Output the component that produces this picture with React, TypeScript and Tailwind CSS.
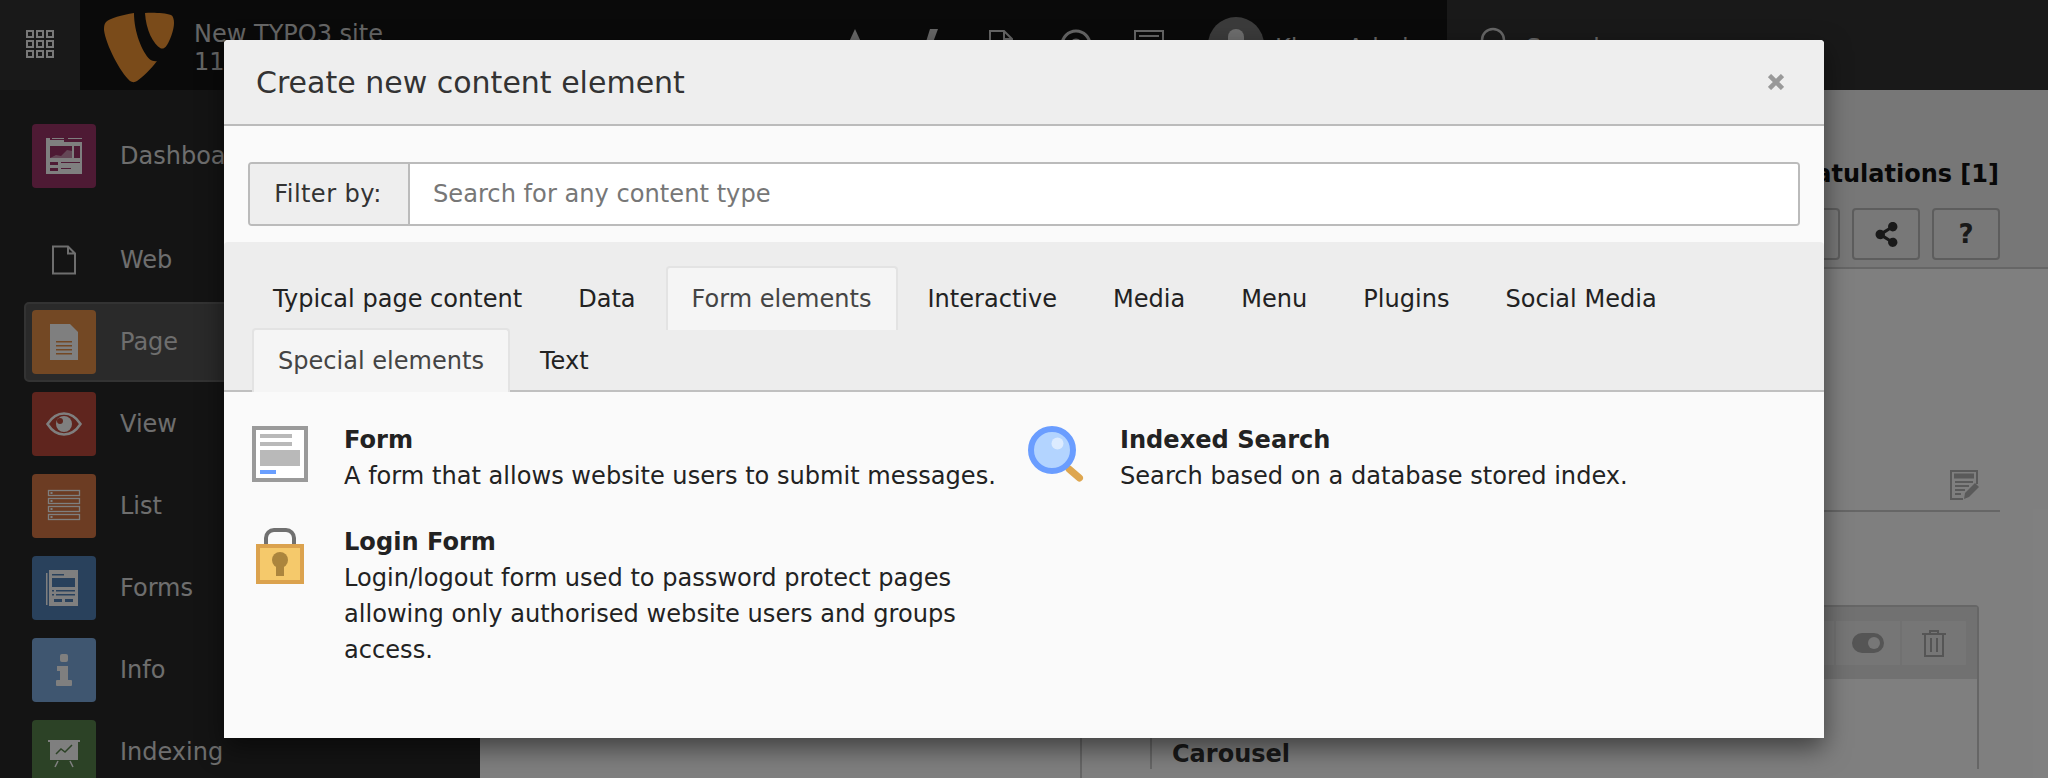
import React from 'react';
import { FaShareAlt } from 'react-icons/fa';

const tabs = [
  { label: 'Typical page content', first: true },
  { label: 'Data' },
  { label: 'Form elements', active: true },
  { label: 'Interactive' },
  { label: 'Media' },
  { label: 'Menu' },
  { label: 'Plugins' },
  { label: 'Social Media' },
  { label: 'Special elements', active: true },
  { label: 'Text' },
];

const DashboardIcon = () => (
  <svg width="64" height="64" viewBox="0 0 64 64">
    <path d="M14 14h4v2h14v2h18v32H14z" fill="#fff" />
    <path d="M20 14h12v1H20zM36 14h14v1H36z" fill="#fff" />
    <path d="M18 22h22v12H18zM42 22h6v12h-6z" fill="#9c3468" />
    <path d="M18 34l6-3 5 1 6-6 5 1v7H18z" fill="#fff" opacity="0.45" />
    <path d="M18 38h8v3h-8zM29 38h19v1H29zM18 44h8v3h-8zM29 44h10v1H29z" fill="#9c3468" />
  </svg>
);

const PageIcon = () => (
  <svg width="64" height="64" viewBox="0 0 64 64">
    <path d="M18 14h20l8 8v28H18z" fill="#fff" />
    <path d="M24 31h16v1.500H24zM24 35h16v1.500H24zM24 39h16v1.500H24zM24 43h16v1.500H24z" fill="#e69049" />
  </svg>
);

const EyeIcon = () => (
  <svg width="64" height="64" viewBox="0 0 64 64">
    <path d="M15.500 32C20 25 26 21.500 32 21.500S44 25 48.500 32C44 39 38 42.500 32 42.500S20 39 15.500 32z" fill="none" stroke="#fff" strokeWidth="2.500" />
    <circle cx="32" cy="32" r="8" fill="#fff" />
    <circle cx="28" cy="29" r="3" fill="#be4a3c" />
  </svg>
);

const ListIcon = () => (
  <svg width="64" height="64" viewBox="0 0 64 64">
    {[16, 24, 32, 40].map((y) => (
      <g key={y}>
        <rect x="16.500" y={y + 0.5} width="31" height="5" fill="none" stroke="#fff" strokeWidth="1.300" />
        <rect x="18.500" y={y + 2} width="2" height="2" fill="#fff" />
      </g>
    ))}
  </svg>
);

const FormsIcon = () => (
  <svg width="64" height="64" viewBox="0 0 64 64">
    <path d="M14 17h1.500v32H14zM17 14h29v36H17z" fill="#fff" />
    <path d="M20 18h12v1.500H20zM20 22h23v9H20zM20 34h2v1.500h-2zM24 34h19v1.500H24zM20 38h2v1.500h-2zM24 38h19v1.500H24z" fill="#5282b8" />
    <path d="M22 43h8v3h-8zM33 43h8v3h-8z" fill="#5282b8" />
  </svg>
);

const InfoIcon = () => (
  <svg width="64" height="64" viewBox="0 0 64 64">
    <rect x="28" y="16" width="8" height="8" rx="2" fill="#fff" />
    <path d="M25 28h11v14h3a1 1 0 0 1 1 1v4a1 1 0 0 1-1 1H25a1 1 0 0 1-1-1v-4a1 1 0 0 1 1-1h3v-9h-3z" fill="#fff" />
  </svg>
);

const IndexingIcon = () => (
  <svg width="64" height="64" viewBox="0 0 64 64">
    <path d="M16 20h32v2h-2v18H18V22h-2z" fill="#fff" />
    <path d="M24 34l5-5 4 3 7-7" fill="none" stroke="#58844c" strokeWidth="1.500" />
    <path d="M26 41l-3 6M38 41l3 6" fill="none" stroke="#fff" strokeWidth="1.500" />
  </svg>
);

const sidebarItems = [
  { label: 'Page', color: 'bg-[#e69049]', icon: <PageIcon />, active: true },
  { label: 'View', color: 'bg-[#be4a3c]', icon: <EyeIcon /> },
  { label: 'List', color: 'bg-[#d87846]', icon: <ListIcon /> },
  { label: 'Forms', color: 'bg-[#5282b8]', icon: <FormsIcon /> },
  { label: 'Info', color: 'bg-[#7eace0]', icon: <InfoIcon /> },
  { label: 'Indexing', color: 'bg-[#58844c]', icon: <IndexingIcon /> },
];

const Logo = () => (
  <svg width="72" height="72" viewBox="102 12 72 72" className="mt-[6px]">
    <path
      d="M134 13C122 15 110 18 106 22C104 24 104 27 104 30C106 45 120 72 130 81C132 82.500 135 82.500 137 81C143 77 151 69 157 61C155 61.500 152 61 150 59.500C142 52 134 32 134 13z"
      fill="#f49734"
    />
    <path
      d="M145 13C154 12.500 165 13 171 15C173 16 174 19 174 23C174 30 170 40 167 45C165 48 163 49 161 48.500C153 44 146 30 145 13z"
      fill="#f49734"
    />
  </svg>
);

const GridIcon = () => (
  <svg width="28" height="28" viewBox="0 0 28 28" fill="none" stroke="#f0f0f0" strokeWidth="2">
    {[1, 11, 21].map((y) =>
      [1, 11, 21].map((x) => <rect key={`${x}-${y}`} x={x} y={y} width="6" height="6" />)
    )}
  </svg>
);

const FormElementIcon = () => (
  <svg width="56" height="56" viewBox="0 0 56 56" className="shrink-0">
    <rect x="2" y="2" width="52" height="52" fill="#fff" stroke="#9a9a9a" strokeWidth="4" />
    <path d="M8 8h32v4H8zM8 16h32v4H8zM8 24h40v16H8z" fill="#b9b9b9" />
    <path d="M8 44h16v4H8z" fill="#6a9fff" />
  </svg>
);

const SearchElementIcon = () => (
  <svg width="56" height="56" viewBox="0 0 56 56" className="shrink-0">
    <path d="M41 43l10.500 9" fill="none" stroke="#dea64f" strokeWidth="7" strokeLinecap="round" />
    <circle cx="24" cy="24" r="21" fill="#b3d4ff" stroke="#6a9dff" strokeWidth="6" />
    <circle cx="29.500" cy="17.500" r="6" fill="#dcebff" />
  </svg>
);

const LockIcon = () => (
  <svg width="56" height="56" viewBox="0 0 56 56" className="shrink-0">
    <path d="M14 18V10a8 8 0 0 1 8-8h12a8 8 0 0 1 8 8v8" fill="none" stroke="#707070" strokeWidth="4" />
    <rect x="6" y="18" width="44" height="36" fill="#f5c96b" stroke="#dba24e" strokeWidth="4" />
    <circle cx="28" cy="32" r="8" fill="#ab853d" />
    <path d="M24 34h8v14h-8z" fill="#ab853d" />
  </svg>
);

const ElementItem = ({
  icon,
  title,
  text,
}: {
  icon: React.ReactNode;
  title: string;
  text: string;
}) => (
  <div className="flex gap-[36px]">
    <div className="pt-[4px]">{icon}</div>
    <div className="min-w-0 flex-1 pr-[24px]">
      <div className="text-[24.1px] font-bold leading-[36px] text-[#222]">{title}</div>
      <div className="text-[24.1px] leading-[36px] text-[#222]">{text}</div>
    </div>
  </div>
);

export default function App() {
  return (
    <div className="relative flex h-screen flex-col overflow-hidden bg-white [font-family:'DejaVu_Sans',sans-serif]">
      {/* Top bar */}
      <header className="flex h-[90px] shrink-0 bg-[#333] text-[24px] text-[#ccc]">
        <div className="flex w-[80px] items-center justify-center pb-[2px]">
          <GridIcon />
        </div>
        <div className="flex w-[1367px] items-center bg-[#151515] pl-[22px]">
          <Logo />
          <div className="ml-[20px] mt-[6px] leading-[28px]">
            <div>New TYPO3 site</div>
            <div>11.5.3</div>
          </div>
          <div className="ml-auto flex items-center pr-[23px]">
            <svg width="28" height="32" viewBox="0 0 28 32" className="mr-[47px]" fill="#ccc">
              <path d="M14 0l12 26H2z" />
            </svg>
            <svg width="28" height="32" viewBox="0 0 28 32" className="mr-[44px]" fill="#ccc">
              <path d="M14 0h8L10 32H4z" />
            </svg>
            <svg width="26" height="32" viewBox="0 0 26 32" className="mr-[46px]" fill="none" stroke="#ccc" strokeWidth="2">
              <path d="M2 2h14l8 8v20H2zM16 2v8h8" />
            </svg>
            <svg width="32" height="32" viewBox="0 0 32 32" className="mr-[42px]" fill="none" stroke="#ccc" strokeWidth="3">
              <circle cx="16" cy="16" r="14" />
              <circle cx="16" cy="16" r="5" fill="#ccc" />
            </svg>
            <svg width="30" height="30" viewBox="0 0 30 30" className="mr-[44px]" fill="none" stroke="#ccc" strokeWidth="2">
              <rect x="1" y="1" width="28" height="28" />
              <path d="M5 6h20M5 11h8v12H5zM17 11h8" />
            </svg>
            <div className="mr-[11px] flex h-[56px] w-[56px] items-center justify-center rounded-full bg-[#777]">
              <div className="h-[32px] w-[16px] rounded-full bg-[#ddd]" />
            </div>
            <span className="pt-[6px]">Klaus Admin</span>
          </div>
        </div>
        <div className="flex flex-1 items-center pl-[33px]">
          <svg width="32" height="36" viewBox="0 0 32 36" fill="none" stroke="#ccc" strokeWidth="2.500" className="mr-[14px]">
            <circle cx="13" cy="13" r="11" />
            <path d="M21 21l8 10" />
          </svg>
          <span className="pt-[6px]">Search</span>
        </div>
      </header>

      <div className="flex min-h-0 flex-1">
        {/* Sidebar */}
        <aside className="w-[480px] shrink-0 bg-[#292929] pt-[25px] text-[24px] text-[#dcdcdc]">
          <div className="flex h-[82px] items-center pl-[32px]">
            <div className="h-[64px] w-[64px] rounded-[4px] bg-[#9c3468]">
              <DashboardIcon />
            </div>
            <span className="ml-[24px]">Dashboard</span>
          </div>
          <div className="mt-[22px] flex h-[82px] items-center pl-[32px]">
            <div className="flex h-[64px] w-[64px] items-center justify-center">
              <svg width="26" height="30" viewBox="0 0 26 30" fill="none" stroke="#ddd" strokeWidth="2">
                <path d="M2 1.500h15l7 7V28.500H2zM17 1.500v7h7" />
              </svg>
            </div>
            <span className="ml-[24px]">Web</span>
          </div>
          {sidebarItems.map((item) => (
            <div key={item.label} className="flex h-[82px] items-center">
              <div
                className={`ml-[24px] flex h-[80px] flex-1 items-center rounded-[5px] border-2 pl-[6px] ${
                  item.active ? 'border-[#666] bg-[#555]' : 'border-transparent'
                }`}
              >
                <div className={`h-[64px] w-[64px] shrink-0 rounded-[4px] ${item.color}`}>{item.icon}</div>
                <span className="ml-[24px]">{item.label}</span>
              </div>
            </div>
          ))}
        </aside>

        {/* Page module */}
        <main className="flex min-w-0 flex-1 flex-col">
          <div className="flex h-[179px] shrink-0 flex-col items-end border-b-2 border-[#ccc] bg-[#eee] pr-[48px] pt-[66px]">
            <div className="mr-[1px] text-[24px] font-bold leading-[36px] text-[#111]">Congratulations [1]</div>
            <div className="mt-[16px] flex gap-[12px]">
              {[
                <span key="x" />,
                <FaShareAlt key="share" size={25} />,
                <span key="q" className="text-[26px] font-bold leading-none">?</span>,
              ].map((icon, i) => (
                <div
                  key={i}
                  className="flex h-[52px] w-[68px] items-center justify-center rounded-[4px] border-2 border-[#bbb] bg-[#f0f0f0] text-[#333]"
                >
                  {icon}
                </div>
              ))}
            </div>
          </div>
          <div className="flex min-h-0 flex-1">
            <div className="w-[602px] shrink-0 border-r-2 border-[#ccc]" />
            <div className="flex-1 pl-[68px] pr-[48px]">
              <div className="flex h-[243px] items-end justify-end border-b-2 border-[#ccc] pb-[10px] pr-[20px]">
                <svg width="30" height="30" viewBox="0 0 30 30" fill="none" stroke="#b4b4b4" strokeWidth="2">
                  <path d="M27 14V1H1v28h12" />
                  <path d="M5 4.500h18v3H5z" fill="#b4b4b4" />
                  <path d="M5 12h18M5 16h14M5 20h10M5 24h6" />
                  <path d="M14 29l1-6 10-10 4 4-10 10z" fill="#b4b4b4" stroke="none" />
                </svg>
              </div>
              <div className="mr-[21px] mt-[93px] rounded-t-[4px] border-x-2 border-t-2 border-[#ccc]">
                <div className="flex h-[72px] items-center justify-end bg-[#e2e2e2] pr-[9px]">
                  <div className="flex h-[48px] rounded-[3px] border-2 border-[#e2e2e2] bg-[#ededed]">
                    <div className="w-[66px] border-r-2 border-[#e2e2e2]" />
                    <div className="flex w-[66px] items-center justify-center border-r-2 border-[#e2e2e2]">
                      <div className="flex h-[20px] w-[32px] items-center justify-end rounded-full bg-[#aaa] pr-[4px]">
                        <div className="h-[12px] w-[12px] rounded-full bg-[#eee]" />
                      </div>
                    </div>
                    <div className="flex w-[64px] items-center justify-center">
                      <svg width="24" height="28" viewBox="0 0 24 28" fill="none" stroke="#aaa" strokeWidth="2">
                        <path d="M0 5h24M8 5V2h8v3M3 5v22h18V5M9 9v14M15 9v14" />
                      </svg>
                    </div>
                  </div>
                </div>
                <div className="bg-white pl-[20px] pt-[60px] text-[24px] font-bold leading-[30px] text-[#333]">Carousel</div>
              </div>
            </div>
          </div>
        </main>
      </div>

      {/* Backdrop */}
      <div className="absolute inset-0 bg-black/50" />

      {/* Modal */}
      <div className="absolute left-[224px] top-[40px] flex h-[698px] w-[1600px] flex-col rounded-t-[4px] bg-[#fafafa] shadow-[0_10px_26px_rgba(0,0,0,0.5)]">
        <div className="flex h-[86px] shrink-0 items-center justify-between rounded-t-[4px] border-b-2 border-[#bbb] bg-[#eee] pl-[32px] pr-[40px]">
          <h2 className="pt-[2px] text-[30px] leading-none text-[#333]">Create new content element</h2>
          <svg width="16" height="16" viewBox="0 0 16 16" fill="none" stroke="#999" strokeWidth="4.500">
            <path d="M1.500 1.500l13 13M14.500 1.500l-13 13" />
          </svg>
        </div>

        <div className="px-[24px] pb-[16px] pt-[36px]">
          <div className="flex h-[64px] overflow-hidden rounded-[4px] border-2 border-[#bbb] text-[24.15px]">
            <div className="flex w-[160px] items-center justify-center border-r-2 border-[#bbb] bg-[#eee] pr-[2px] tracking-[0.4px] text-[#333]">
              Filter by:
            </div>
            <input
              readOnly
              placeholder="Search for any content type"
              className="min-w-0 flex-1 bg-white pl-[23px] text-[#333] outline-none placeholder:text-[#777]"
            />
          </div>
        </div>

        <div className="flex flex-wrap rounded-t-[4px] border-b-2 border-[#c0c0c0] bg-[#ededed] pb-0 pl-[28px] pt-[24px] text-[24.05px]">
          {tabs.map((tab) => (
            <div
              key={tab.label}
              className={`mb-[-2px] mr-[4px] flex h-[64px] items-center rounded-t-[4px] border-x-2 border-t-2 px-[24px] ${
                tab.first ? '-ml-[5px] ' : ''
              }${tab.active ? 'border-[#e3e3e3] bg-[#f5f5f5] text-[#444]' : 'border-transparent text-[#222]'}`}
            >
              {tab.label}
            </div>
          ))}
        </div>

        <div className="grid flex-1 grid-cols-2 content-start gap-y-[30px] pl-[28px] pr-[20px] pt-[30px]">
          <ElementItem
            icon={<FormElementIcon />}
            title="Form"
            text="A form that allows website users to submit messages."
          />
          <ElementItem
            icon={<SearchElementIcon />}
            title="Indexed Search"
            text="Search based on a database stored index."
          />
          <ElementItem
            icon={<LockIcon />}
            title="Login Form"
            text="Login/logout form used to password protect pages allowing only authorised website users and groups access."
          />
        </div>
      </div>
    </div>
  );
}
